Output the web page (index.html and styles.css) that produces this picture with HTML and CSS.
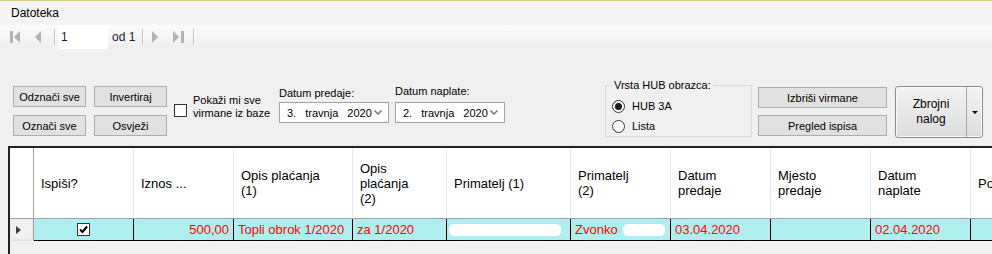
FILE: index.html
```html
<!DOCTYPE html>
<html lang="hr">
<head>
    <meta charset="UTF-8">
    <title>Virmani</title>
    <link rel="stylesheet" href="styles.css">
</head>
<body>
    <div class="topline"></div>
    <div class="menubar">Datoteka</div>

    <div class="toolbar">
        <svg class="nav-first" width="11" height="12" viewBox="0 0 11 12"><rect x="0" y="0" width="3" height="12" fill="#b2b2b2"/><polygon points="10,0 4,6 10,12" fill="#b2b2b2"/></svg>
        <svg class="nav-prev" width="7" height="12" viewBox="0 0 7 12"><polygon points="6,0 0,6 6,12" fill="#b2b2b2"/></svg>
        <span class="tb-sep"></span>
        <span class="tb-input">1</span>
        <span class="tb-count">od 1</span>
        <span class="tb-sep tb-sep-b"></span>
        <svg class="nav-next" width="7" height="12" viewBox="0 0 7 12"><polygon points="0,0 6,6 0,12" fill="#b2b2b2"/></svg>
        <svg class="nav-last" width="11" height="12" viewBox="0 0 11 12"><polygon points="0,0 6,6 0,12" fill="#b2b2b2"/><rect x="8" y="0" width="3" height="12" fill="#b2b2b2"/></svg>
        <span class="tb-sep tb-sep-c"></span>
    </div>

    <div class="panel">
        <div class="btn-col">
            <button class="btn">Odznači sve</button>
            <button class="btn">Označi sve</button>
        </div>
        <div class="btn-col col-two">
            <button class="btn">Invertiraj</button>
            <button class="btn">Osvježi</button>
        </div>
        <div class="check-block">
            <span class="checkbox"></span>
            <span class="check-label">Pokaži mi sve<br>virmane iz baze</span>
        </div>
        <div class="date-block">
            <div class="date-label">Datum predaje:</div>
            <div class="date-picker">
                <span class="date-text">3. travnja 2020</span>
                <svg class="chevron" width="8" height="5" viewBox="0 0 8 5"><polyline points="0.5,0.5 4,4 7.5,0.5" fill="none" stroke="#6d6d6d" stroke-width="1.4"/></svg>
            </div>
        </div>
        <div class="date-block date-two">
            <div class="date-label">Datum naplate:</div>
            <div class="date-picker">
                <span class="date-text">2. travnja 2020</span>
                <svg class="chevron" width="8" height="5" viewBox="0 0 8 5"><polyline points="0.5,0.5 4,4 7.5,0.5" fill="none" stroke="#6d6d6d" stroke-width="1.4"/></svg>
            </div>
        </div>
        <fieldset class="hub-group">
            <legend>Vrsta HUB obrazca:</legend>
            <div class="radio-row"><span class="radio checked"></span>HUB 3A</div>
            <div class="radio-row"><span class="radio"></span>Lista</div>
        </fieldset>
        <div class="btn-col col-wide">
            <button class="btn">Izbriši virmane</button>
            <button class="btn">Pregled ispisa</button>
        </div>
        <div class="split-btn">
            <span class="split-main">Zbrojni<br>nalog</span>
            <span class="split-drop"><span class="drop-arrow"></span></span>
        </div>
    </div>

    <div class="grid">
        <div class="grid-row head">
            <div class="cell rowhead"></div>
            <div class="cell">Ispiši?</div>
            <div class="cell">Iznos ...</div>
            <div class="cell">Opis plaćanja<br>(1)</div>
            <div class="cell">Opis<br>plaćanja<br>(2)</div>
            <div class="cell">Primatelj (1)</div>
            <div class="cell">Primatelj<br>(2)</div>
            <div class="cell">Datum<br>predaje</div>
            <div class="cell">Mjesto<br>predaje</div>
            <div class="cell">Datum<br>naplate</div>
            <div class="cell">Po</div>
        </div>
        <div class="grid-row data">
            <div class="cell rowhead"><span class="row-arrow"></span></div>
            <div class="cell center">
                <svg width="13" height="13" viewBox="0 0 13 13"><rect x="0.5" y="0.5" width="12" height="12" fill="#fff" stroke="#333"/><polyline points="3,6.5 5.5,9 10,3.5" fill="none" stroke="#000" stroke-width="2"/></svg>
            </div>
            <div class="cell right">500,00</div>
            <div class="cell">Topli obrok 1/2020</div>
            <div class="cell">za 1/2020</div>
            <div class="cell"><span class="blank blank-long"></span></div>
            <div class="cell">Zvonko<span class="blank blank-short"></span></div>
            <div class="cell">03.04.2020</div>
            <div class="cell"></div>
            <div class="cell">02.04.2020</div>
            <div class="cell"></div>
        </div>
    </div>
</body>
</html>
```

FILE: styles.css
```css
body {
    margin: 0;
    width: 992px;
    height: 254px;
    overflow: hidden;
    background: #f0f0f0;
    font-family: "Liberation Sans", Arial, sans-serif;
    font-size: 11px;
    color: #000;
}
.topline {
    height: 1px;
    background: #d6c98c;
}
.menubar {
    height: 24px;
    line-height: 24px;
    padding-left: 11px;
    font-size: 12px;
    background: #f4f4f4;
}

/* navigation toolbar */
.toolbar {
    height: 24px;
    display: flex;
    align-items: center;
    padding-left: 10px;
    background: linear-gradient(#fbfbfb, #eeeeee);
    font-size: 12px;
}
.nav-prev {
    margin-left: 14px;
}
.tb-sep {
    width: 1px;
    height: 16px;
    background: #c2c2c2;
    border-right: 1px solid #fff;
    margin-left: 12px;
}
.tb-sep-b {
    margin-left: 7px;
}
.tb-sep-c {
    margin-left: 9px;
}
.tb-input {
    align-self: stretch;
    width: 47px;
    margin-left: 2px;
    padding-left: 3px;
    line-height: 24px;
    background: #fff;
    color: #1a1a3a;
}
.tb-count {
    margin-left: 4px;
    color: #1a1a3a;
}
.nav-next {
    margin-left: 8px;
}
.nav-last {
    margin-left: 14px;
}

/* controls panel */
.panel {
    height: 97px;
    display: flex;
    align-items: flex-start;
    padding-left: 13px;
}
.btn-col {
    display: flex;
    flex-direction: column;
    gap: 8px;
    margin-top: 37px;
}
.col-two {
    margin-left: 8px;
}
.btn {
    width: 73px;
    height: 21px;
    padding: 0;
    border: 1px solid #adadad;
    background: #e1e1e1;
    font-family: "Liberation Sans", Arial, sans-serif;
    font-size: 11px;
    color: #000;
}
.check-block {
    display: flex;
    align-items: flex-start;
    margin-top: 45px;
    margin-left: 7px;
}
.checkbox {
    width: 11px;
    height: 11px;
    margin-top: 10px;
    border: 1px solid #333;
    background: #fff;
}
.check-label {
    width: 86px;
    margin-left: 6px;
    line-height: 13px;
}
.date-block {
    width: 110px;
    margin-top: 38px;
}
.date-label {
    line-height: 13px;
}
.date-two {
    margin-left: 6px;
    margin-top: 36px;
}
.date-picker {
    height: 19px;
    margin-top: 2px;
    display: flex;
    align-items: center;
    justify-content: space-between;
    padding: 0 6px 0 7px;
    border: 1px solid #a2a2a2;
    background: #fff;
}
.date-two .date-picker {
    margin-top: 4px;
}
.date-text {
    word-spacing: 6px;
}
.hub-group {
    box-sizing: border-box;
    width: 147px;
    height: 58px;
    margin: 30px 0 0 100px;
    padding: 0 0 0 6px;
    border: 1px solid #dcdcdc;
}
.hub-group legend {
    padding: 0 2px;
    line-height: 13px;
}
.radio-row {
    height: 20px;
    display: flex;
    align-items: center;
}
.radio-row:first-of-type {
    margin-top: 4px;
}
.radio {
    box-sizing: border-box;
    width: 13px;
    height: 13px;
    margin-right: 7px;
    border: 1px solid #333;
    border-radius: 50%;
    background: #fff;
    display: flex;
    align-items: center;
    justify-content: center;
}
.radio.checked::after {
    content: "";
    width: 7px;
    height: 7px;
    border-radius: 50%;
    background: #1a1a1a;
}
.col-wide {
    margin-left: 6px;
    margin-top: 38px;
    gap: 7px;
}
.col-wide .btn {
    width: 129px;
}
.split-btn {
    box-sizing: border-box;
    width: 88px;
    height: 52px;
    margin: 37px 0 0 8px;
    display: flex;
    border: 1px solid #8c8c8c;
    border-radius: 3px;
    background: linear-gradient(#f3f3f3, #dcdcdc);
    box-shadow: inset 0 0 0 1px #f8f8f8;
}
.split-main {
    flex: 1;
    display: flex;
    align-items: center;
    justify-content: center;
    text-align: center;
    font-size: 12px;
    line-height: 15px;
    border-right: 1px solid #a5a5a5;
}
.split-drop {
    width: 15px;
    display: flex;
    align-items: center;
    justify-content: center;
}
.drop-arrow {
    width: 0;
    height: 0;
    border-left: 3px solid transparent;
    border-right: 3px solid transparent;
    border-top: 3px solid #000;
}

/* data grid */
.grid {
    height: 106px;
    margin-left: 8px;
    overflow: hidden;
    border-top: 2px solid #222;
    border-left: 2px solid #222;
    background: #f0f0f0;
}
.grid-row {
    display: grid;
    grid-template-columns: 24px 100px 100px 119px 94px 124px 100px 100px 100px 100px 100px;
    font-size: 13px;
}
.cell {
    box-sizing: border-box;
    display: flex;
    align-items: center;
    white-space: nowrap;
    overflow: hidden;
}
.head .cell {
    height: 71px;
    padding-left: 7px;
    line-height: 15px;
    background: #fff;
    border-right: 1px solid #e3e9f3;
    border-bottom: 1px solid #a0a0a0;
}
.head .rowhead {
    border-right-color: #a0a0a0;
}
.data .cell {
    height: 22px;
    padding: 0 4px;
    color: #f00;
    background: #afeeee;
    border-right: 1px solid #000;
    border-bottom: 1px solid #000;
}
.data .rowhead {
    padding-left: 6px;
    background: #f0f0f0;
    border-right-color: #a0a0a0;
    border-bottom-color: #dde5ee;
    box-shadow: inset 0 0 0 1px #e4ebf4;
}
.row-arrow {
    width: 0;
    height: 0;
    border-top: 4px solid transparent;
    border-bottom: 4px solid transparent;
    border-left: 5px solid #3c3c3c;
}
.data .center {
    justify-content: center;
}
.data .right {
    justify-content: flex-end;
}
.blank {
    height: 12px;
    border-radius: 5px;
    background: #fff;
}
.blank-long {
    width: 112px;
    margin-left: -2px;
}
.blank-short {
    width: 42px;
    margin-left: 5px;
}
```
